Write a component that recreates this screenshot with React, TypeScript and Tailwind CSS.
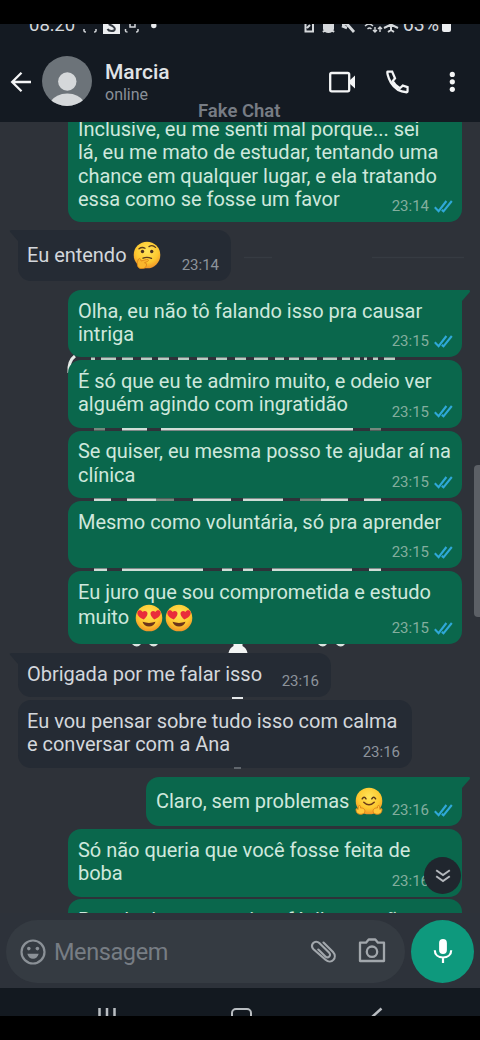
import React from "react";

type EmojiName = "thinking" | "hearts" | "hug";

type Line = {
  text: string;
  emojis?: EmojiName[];
  className?: string;
};

type Message = {
  id: number;
  mine: boolean;
  lines: Line[];
  time: string;
  box: string;
  tail?: boolean;
};

const messages: Message[] = [
  {
    id: 1,
    mine: true,
    time: "23:14",
    box: "h-[114px] w-[394px] -mt-[14px]",
    lines: [
      { text: "Inclusive, eu me senti mal porque... sei" },
      { text: "lá, eu me mato de estudar, tentando uma" },
      { text: "chance em qualquer lugar, e ela tratando" },
      { text: "essa como se fosse um favor" },
    ],
  },
  {
    id: 2,
    mine: false,
    tail: true,
    time: "23:14",
    box: "h-[51px] w-[213px] mt-2",
    lines: [{ text: "Eu entendo", emojis: ["thinking"], className: "mt-[4px]" }],
  },
  {
    id: 3,
    mine: true,
    tail: true,
    time: "23:15",
    box: "h-[67px] w-[394px] mt-[9px]",
    lines: [{ text: "Olha, eu não tô falando isso pra causar" }, { text: "intriga" }],
  },
  {
    id: 4,
    mine: true,
    time: "23:15",
    box: "h-[67.5px] w-[394px] mt-[3px]",
    lines: [{ text: "É só que eu te admiro muito, e odeio ver" }, { text: "alguém agindo com ingratidão" }],
  },
  {
    id: 5,
    mine: true,
    time: "23:15",
    box: "h-[67.5px] w-[394px] mt-[3px]",
    lines: [{ text: "Se quiser, eu mesma posso te ajudar aí na" }, { text: "clínica" }],
  },
  {
    id: 6,
    mine: true,
    time: "23:15",
    box: "h-[67px] w-[394px] mt-[3px]",
    lines: [{ text: "Mesmo como voluntária, só pra aprender" }],
  },
  {
    id: 7,
    mine: true,
    time: "23:15",
    box: "h-[73px] w-[394px] mt-[3px]",
    lines: [
      { text: "Eu juro que sou comprometida e estudo" },
      { text: "muito", emojis: ["hearts", "hearts"], className: "mt-[2px]" },
    ],
  },
  {
    id: 8,
    mine: false,
    tail: true,
    time: "23:16",
    box: "h-[44px] w-[313px] mt-[9px]",
    lines: [{ text: "Obrigada por me falar isso" }],
  },
  {
    id: 9,
    mine: false,
    time: "23:16",
    box: "h-[68px] w-[394px] mt-[3px]",
    lines: [{ text: "Eu vou pensar sobre tudo isso com calma" }, { text: "e conversar com a Ana" }],
  },
  {
    id: 10,
    mine: true,
    tail: true,
    time: "23:16",
    box: "h-[49px] w-[316px] mt-[9px]",
    lines: [{ text: "Claro, sem problemas", emojis: ["hug"], className: "mt-[3px]" }],
  },
  {
    id: 11,
    mine: true,
    time: "23:16",
    box: "h-[68px] w-[394px] mt-[3px]",
    lines: [{ text: "Só não queria que você fosse feita de" }, { text: "boba" }],
  },
  {
    id: 12,
    mine: true,
    time: "23:16",
    box: "h-[68px] w-[394px] mt-[2px]",
    lines: [{ text: "Por ela dar a entrevista fácil, e eu não" }],
  },
];

function Emoji({ name }: { name: EmojiName }) {
  return (
    <svg viewBox="0 0 28 28" className="-my-2 h-7 w-7 shrink-0">
      <defs>
        <radialGradient id={`face-${name}`} cx="0.5" cy="0.35" r="0.65">
          <stop offset="0" stopColor="#ffe45a" />
          <stop offset="0.65" stopColor="#fdc82f" />
          <stop offset="1" stopColor="#ef9428" />
        </radialGradient>
      </defs>
      <circle cx="14" cy="14" r="13.3" fill={`url(#face-${name})`} />
      {name === "thinking" && (
        <>
          <circle cx="9.5" cy="10.5" r="1.7" fill="#4a3020" />
          <circle cx="18.7" cy="10.5" r="1.7" fill="#4a3020" />
          <path d="M6 7.8q3-2.3 6-.6M16 5.6q3.500-2.200 6.500.8M10 17.200q4-1.800 8.500.2" fill="none" stroke="#5a3b1e" strokeWidth="1.3" strokeLinecap="round" />
          <path
            d="M5.500 18c1.200-1.200 2.500 0 2.600 2l5.600-1.600c2-.5 2.500 1.500.8 2.100l-3 1.200c2.300.2 2.400 2 1.600 3.600-1 2.500-4.600 3.200-7.100 1.600C3.500 25.300 4.200 20.500 5.500 18z"
            fill="#f9b52c"
            stroke="#d98016"
            strokeWidth="0.8"
          />
        </>
      )}
      {name === "hearts" && (
        <>
          <path d="M8.700 15.500C4.500 13.800 1.800 11 2.400 8.300c.6-2.500 4-2.600 5.200-.2 1.700-2 5-1 4.900 1.600 0 2.200-2 4.200-3.800 5.800z" fill="#e92c3b" />
          <path d="M19.300 15.500c4.200-1.700 6.900-4.500 6.300-7.200-.6-2.500-4-2.600-5.200-.2-1.700-2-5-1-4.900 1.600 0 2.200 2 4.200 3.800 5.800z" fill="#e92c3b" />
          <path d="M7.500 17.800q6.500 2.200 13 0c-.9 3.200-3.300 4.700-6.500 4.700s-5.600-1.500-6.500-4.700z" fill="#6b341a" />
        </>
      )}
      {name === "hug" && (
        <>
          <path d="M7.200 11.800q1.900-3 3.800 0M16.800 11.800q1.900-3 3.800 0" fill="none" stroke="#5a3518" strokeWidth="1.500" strokeLinecap="round" />
          <path d="M8.800 15.200q5.200 5.200 10.400 0" fill="none" stroke="#6b3a18" strokeWidth="1.500" strokeLinecap="round" />
          <path
            d="M1 22.500c0-1.200 1.400-1.200 2 0l.5-3.200c.3-1.200 1.800-1 1.900.2l.2 1.500c3-.2 4.800 1.500 4.200 4-.6 2.300-5 3-7 1.600C1.600 25.600 1 24 1 22.500zM27 22.500c0-1.200-1.400-1.200-2 0l-.5-3.200c-.3-1.200-1.800-1-1.900.2l-.2 1.500c-3-.2-4.800 1.500-4.200 4 .6 2.300 5 3 7 1.600 1.200-1 1.800-2.600 1.800-4.100z"
            fill="#ffc83a"
            stroke="#de8419"
            strokeWidth="0.900"
          />
        </>
      )}
    </svg>
  );
}

function Ticks() {
  return (
    <svg viewBox="0 0 19 13" className="h-[13px] w-[19px]" fill="none" stroke="#2fa8d8" strokeWidth="2.100">
      <path d="M0.800 7.200L4.600 11.200L12.400 1" />
      <path d="M7.800 9.900L9.500 11.300L17.800 1" />
    </svg>
  );
}

function Bubble({ message }: { message: Message }) {
  const { mine, tail, lines, time, box } = message;

  return (
    <div
      className={`relative grid shrink-0 rounded-[13px] ${box} ${
        mine ? "self-end bg-[#0a674c] pr-[9px] pl-[10px] text-[#cfe8dd]" : "self-start bg-[#252b34] pr-3 pl-[9px] text-[#d3d7dc]"
      } ${tail ? (mine ? "rounded-tr-none" : "rounded-tl-none") : ""}`}
    >
      {tail && (
        <svg viewBox="0 0 10 11" className={`absolute top-0 h-[11px] w-[10px] ${mine ? "-right-[9px]" : "-left-[9px] -scale-x-100"}`}>
          <path d="M0 0H8Q10 0.500 8.800 2L1 11H0z" fill={mine ? "#0a674c" : "#252b34"} />
        </svg>
      )}
      <div className="col-start-1 row-start-1 pt-[9.5px] text-[20px] leading-[23.5px] tracking-[-0.02px] whitespace-nowrap">
        {lines.map((line) => (
          <p key={line.text} className={`flex items-center ${line.className ?? ""}`}>
            <span>{line.text}</span>
            {line.emojis && (
              <span className="ml-1.5 flex gap-[2px]">
                {line.emojis.map((name, i) => (
                  <Emoji key={i} name={name} />
                ))}
              </span>
            )}
          </p>
        ))}
      </div>
      <div
        className={`col-start-1 row-start-1 mb-[7px] flex items-center gap-[5px] self-end justify-self-end text-[15px] leading-[18px] ${
          mine ? "text-[#83ae9e]" : "text-[#8d939b]"
        }`}
      >
        <span>{time}</span>
        {mine && <Ticks />}
      </div>
    </div>
  );
}

// Bright strips of the wallpaper drawing that show between the bubbles
function Wallpaper() {
  return (
    <svg viewBox="0 122 480 791" className="absolute inset-0 h-full w-full">
      <g stroke="#363b42" strokeWidth="1.500">
        <path d="M244 257.500h28M372 257.500h92" />
      </g>
      <path d="M69 373q-1-12 6-17" fill="none" stroke="#e6ece8" strokeWidth="3" />
      <g stroke="#b9cec4" strokeWidth="2.500">
        <path d="M91 358.800h4M101 358.800h15M122 358.800h11M141 358.800h11M158 358.800h11M178 358.800h11M197 358.800h11M216 358.800h11M235 358.800h11M254 358.800h14M275 358.800h9M289 358.800h10M304 358.800h13M323 358.800h14M342 358.800h8M354 358.800h6M364 358.800h3M373 358.800h5M384 358.800h11" />
      </g>
      <g stroke="#cfded7" strokeWidth="2.500">
        <path d="M122 429.300h25M161 429.300h192" />
        <path d="M94 499.700h17M127 499.700h29M193 499.700h38M243 499.700h40M321 499.700h27M364 499.700h17" />
        <path d="M94 569.800h13M122 569.800h81M222 569.800h10M243 569.800h10M272 569.800h80M369 569.800h12" />
      </g>
      <g stroke="#75897e" strokeWidth="2.500">
        <path d="M94 429.300h11M370 429.300h11M156 499.700h18M300 499.700h21" />
      </g>
      <g fill="#dce4e0">
        <path d="M132 644h9q-4 5-9 0zM149 644h9q-4 5-9 0zM318 644h9q-4 5-9 0zM336 644h9q-4 5-9 0z" />
        <path d="M228.500 653q1-5 5-7v-2h9v2q4 2 5 7z" fill="#f2f4f3" />
      </g>
    </svg>
  );
}

function StatusBar() {
  return (
    <div className="flex h-[10px] items-end justify-between overflow-hidden pr-[29px] pl-[29px] text-[#d5d8db]">
      <div className="flex items-end">
        <span className="text-[18.5px] leading-[18px]">08:20</span>
        <svg viewBox="83 24 75 10" className="ml-2 h-[10px] w-[75px]">
          <path d="M84 29v2q0 1 2 1M96 29v2q0 1-2 1M125.500 29v2q0 1 2 1M138 29v2q0 1-2 1M130 24v3h5v-3" fill="none" stroke="#d5d8db" strokeWidth="1.500" />
          <path d="M103 24h17v10.500h-17z" fill="#eceef0" />
          <path d="M107.500 29q1 2 4 2 3.800 0 3.200-2.600-.4-1.800-6-4.400" fill="none" stroke="#343a42" strokeWidth="2" />
          <circle cx="153.800" cy="25.500" r="2.700" fill="#e8eaec" />
        </svg>
      </div>
      <div className="flex items-end">
        <svg viewBox="301 24 97 10" className="h-[10px] w-[97px]" fill="none" stroke="#d5d8db" strokeWidth="2">
          <path d="M303.500 24v7.500h7.500v-7.500M305 28l3-3" />
          <path d="M322 24h9v5q-1 3-4.500 3t-4.500-3zM321 32l2-2M332 32l-2-2" fill="#d5d8db" />
          <path d="M340 24h5l7 8M340 26l5 2" strokeWidth="2.800" />
          <path d="M363 26q4-4 8 0M365.500 29q2-2 4 0M373 27v5M371 30l2 2 2-2M378 32v-5M376 29l2-2 2 2" strokeWidth="1.400" />
          <path d="M382 28l7-3.500 7 3.500M389 24v7M386 32l3-2 3 2" />
        </svg>
        <span className="ml-[3px] text-[19.5px] leading-[18px]">63%</span>
        <span className="mb-[2px] ml-[3px] h-[9px] w-[9px] rounded-b-[2px] bg-[#eceef0]" />
      </div>
    </div>
  );
}

function Header() {
  return (
    <header className="flex h-[98px] shrink-0 flex-col bg-[#141a22]">
      <StatusBar />
      <div className="relative flex grow items-start pt-[22px] pl-[10px]">
        <svg viewBox="0 0 22 22" className="mt-[15px] h-[22px] w-[22px]" fill="none" stroke="#f4f5f6" strokeWidth="2.300">
          <path d="M21 11H2.500M11.500 1.700L2.200 11l9.300 9.300" />
        </svg>
        <svg viewBox="0 0 50 50" className="ml-[10px] h-[50px] w-[50px] rounded-full bg-[#6c7379]">
          <circle cx="25.300" cy="25.500" r="9.200" fill="#d5d8da" />
          <path d="M8 46q6-8.500 17.300-8.500T42.500 46v6H8z" fill="#d5d8da" />
        </svg>
        <div className="mt-[4px] ml-[13px] flex grow flex-col">
          <span className="text-[21px] leading-6 font-medium text-[#e0e3e6]">Marcia</span>
          <span className="mt-px text-[16px] leading-[19px] text-[#8a9098]">online</span>
        </div>
        <svg viewBox="328 68 132 28" className="mt-[12px] mr-5 h-[28px] w-[132px]">
          <g fill="none" stroke="#f4f5f6" strokeWidth="2.300">
            <rect x="330.200" y="73" width="19" height="18.300" rx="1.500" />
            <path
              transform="translate(383.500 67.500) scale(1.140)"
              strokeWidth="2"
              d="M7.600 3.600H3.600C3 3.600 3.600 8.500 6.500 13.200c3.200 5.200 8.700 8.200 13.800 8.500.5 0 .8-.3.800-.8v-3.700l-4.200-1.300-2.500 2.300c-2.800-1.400-5-3.700-6.300-6.300l2-2.500z"
            />
          </g>
          <path d="M349 81l6-5.500v13l-6-5.500z" fill="#f4f5f6" />
          <g fill="#f4f5f6">
            <circle cx="452.300" cy="74.400" r="2.600" />
            <circle cx="452.300" cy="81.800" r="2.600" />
            <circle cx="452.300" cy="89.300" r="2.600" />
          </g>
        </svg>
        <span className="absolute bottom-0 left-[198px] text-[18.500px] leading-[22px] font-semibold text-[#777c84]">Fake Chat</span>
      </div>
    </header>
  );
}

function Composer() {
  return (
    <div className="flex h-[75px] shrink-0 items-start gap-1.5 bg-[#2d323a] pt-[7px] pr-[6px] pl-[6px]">
      <div className="flex h-[63px] w-[399px] items-center rounded-full bg-[#353b42] pr-[18px] pl-[14px] text-[#8b9197]">
        <svg viewBox="0 0 26 26" className="h-[26px] w-[26px]">
          <circle cx="13" cy="13" r="11.500" fill="none" stroke="currentColor" strokeWidth="2.200" />
          <circle cx="8.800" cy="9.600" r="1.800" fill="currentColor" />
          <circle cx="17.400" cy="9.600" r="1.800" fill="currentColor" />
          <path d="M7.300 14.800h11.400c-.7 3-3 5-5.700 5s-5-2-5.700-5z" fill="currentColor" />
        </svg>
        <span className="ml-[8px] grow text-[23.500px] leading-7 tracking-[-0.4px] text-[#777d84]">Mensagem</span>
        <svg viewBox="0 0 26 24" className="h-6 w-[26px]" fill="none" stroke="#a2a7ac" strokeWidth="2.100" strokeLinecap="round">
          <path d="M13.500 2.500l9.500 9.500c5 5.500-1.500 13-7.500 7.800L3.500 9.200C-.5 5 5-1 9.300 3L19 12.500c3 3-1 6.500-3.600 4L8.300 9.600" />
        </svg>
        <svg viewBox="0 0 28 25" className="-mt-[2px] mr-px ml-[22px] h-[25px] w-7" fill="none" stroke="#a2a7ac" strokeWidth="2.300" strokeLinejoin="round">
          <path d="M2 4.700h6l2.700-3.200h6.600L20 4.700h6v18.300H2z" />
          <circle cx="14" cy="13.700" r="5.200" />
        </svg>
      </div>
      <button className="flex h-[63px] w-[63px] items-center justify-center rounded-full bg-[#0e997d]">
        <svg viewBox="0 0 20 26" className="-mt-px h-[26px] w-5" fill="none" stroke="#fff" strokeWidth="2.200">
          <rect x="6.100" y="1" width="7.800" height="15" rx="3.900" fill="#fff" stroke="none" />
          <path d="M1.800 12.200c0 4.500 3.500 7.300 8.200 7.300s8.200-2.800 8.200-7.300M10 19.500v5.500" />
        </svg>
      </button>
    </div>
  );
}

export default function App() {
  return (
    <div className="flex h-[1040px] w-[480px] flex-col overflow-hidden bg-black pt-6 pb-6 font-['Roboto',sans-serif]">
      <Header />

      <main className="relative h-[791px] shrink-0 overflow-hidden bg-[#2e3239]">
        <Wallpaper />
        <div className="relative flex flex-col pr-[18px] pl-[18px]">
          {messages.map((message) => (
            <Bubble key={message.id} message={message} />
          ))}
        </div>

        {/* small marks over the received bubbles */}
        <span className="absolute top-[575px] left-[232px] h-[2px] w-[11px] bg-[#e4e7e9]" />
        <span className="absolute top-[645px] left-[234px] h-[2px] w-[7px] bg-[#60666d]" />

        <span className="absolute top-[343px] right-0 h-[152px] w-[6px] rounded-l-[4px] bg-[#5c6066]" />

        <button className="absolute top-[735px] left-[424px] flex h-[37px] w-[37px] items-center justify-center rounded-full bg-[#20262e]">
          <svg viewBox="0 0 16 14" className="h-[14px] w-4" fill="none" stroke="#b4b8bd" strokeWidth="2">
            <path d="M1.200 1.200L8 6l6.800-4.800M1.200 7.200L8 12l6.800-4.800" />
          </svg>
        </button>
      </main>

      <Composer />

      <nav className="h-[28px] shrink-0 overflow-hidden bg-[#131920]">
        <svg viewBox="0 988 480 28" className="h-[28px] w-[480px]" fill="none" stroke="#b9bdc1" strokeWidth="2.500">
          <path d="M99.500 1008v12M107 1008v12M114.500 1008v12" />
          <rect x="232" y="1009" width="19" height="18" rx="4" strokeWidth="2" />
          <path d="M381.500 1008.500l-10 9" />
        </svg>
      </nav>
    </div>
  );
}
